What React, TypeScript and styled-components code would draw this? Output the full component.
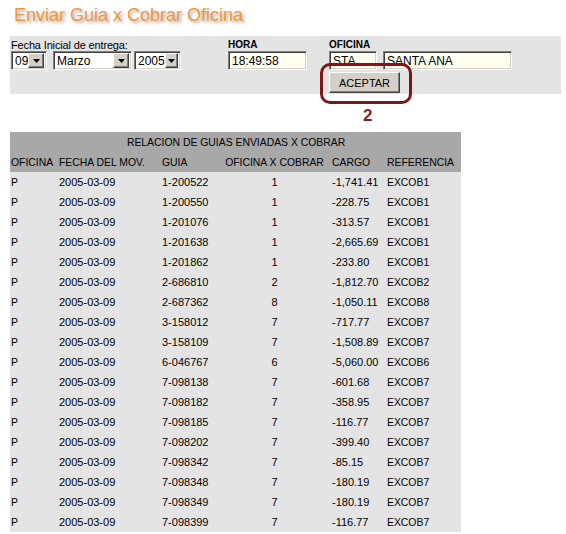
import React from "react";
import styled, { createGlobalStyle } from "styled-components";

const Global = createGlobalStyle`
  html, body { margin: 0; padding: 0; background: #ffffff; }
  body { font-family: "Liberation Sans", Arial, sans-serif; font-size: 11px; color: #000; }
`;

const Page = styled.div`
  width: 566px;
  height: 534px;
  overflow: hidden;
  position: relative;
`;

const Title = styled.h1`
  margin: 0;
  padding: 4px 0 0 14px;
  height: 32px;
  box-sizing: border-box;
  font-family: "Liberation Sans", Arial, sans-serif;
  font-weight: normal;
  font-size: 18px;
  line-height: 22px;
  color: #ec9843;
  text-shadow: 2px 2px 3px rgba(90, 60, 30, 0.45);
`;

const Panel = styled.div`
  position: relative;
  margin: 4px 0 0 10px;
  width: 551px;
  height: 58px;
  background: #e4e4e4;
  display: grid;
  grid-template-columns: 217px 101px 1fr;
  padding: 3px 0 0 1px;
  box-sizing: border-box;
`;

const Group = styled.div`
  display: flex;
  flex-direction: column;
`;

const Label = styled.div<{ $bold?: boolean }>`
  font-size: ${(p) => (p.$bold ? "10px" : "11px")};
  font-weight: ${(p) => (p.$bold ? "bold" : "normal")};
  line-height: 12px;
  height: 12px;
  letter-spacing: ${(p) => (p.$bold ? "0" : "-0.15px")};
`;

const Row = styled.div<{ $gap: number }>`
  display: flex;
  gap: ${(p) => p.$gap}px;
`;

const SelectBox = styled.div<{ $w: number }>`
  width: ${(p) => p.$w}px;
  height: 19px;
  box-sizing: border-box;
  background: #fff;
  border-style: solid;
  border-width: 1px;
  border-color: #808080 #ffffff #ffffff #808080;
  box-shadow: inset 1px 1px 0 #404040, inset -1px -1px 0 #d4d0c8;
  display: flex;
  align-items: center;
  justify-content: space-between;
  padding: 0 2px 0 3px;
  font-size: 12px;
`;

const ArrowBtn = styled.div`
  width: 16px;
  height: 15px;
  box-sizing: border-box;
  background: #d4d0c8;
  border-style: solid;
  border-width: 1px;
  border-color: #ffffff #404040 #404040 #ffffff;
  box-shadow: inset -1px -1px 0 #808080;
  display: flex;
  align-items: center;
  justify-content: center;
`;

const TextBox = styled.div<{ $w: number }>`
  width: ${(p) => p.$w}px;
  height: 19px;
  box-sizing: border-box;
  background: #fffff0;
  border-style: solid;
  border-width: 1px;
  border-color: #808080 #ffffff #ffffff #808080;
  box-shadow: inset 1px 1px 0 #404040, inset -1px -1px 0 #d4d0c8;
  display: flex;
  align-items: center;
  padding-left: 3px;
  font-size: 12px;
  white-space: nowrap;
  overflow: hidden;
`;

const Button = styled.button`
  margin-top: 2px;
  width: 71px;
  height: 21px;
  box-sizing: border-box;
  background: #d4d0c8;
  border-style: solid;
  border-width: 1px;
  border-color: #ffffff #404040 #404040 #ffffff;
  box-shadow: inset -1px -1px 0 #808080;
  font-family: "Liberation Sans", Arial, sans-serif;
  font-size: 11px;
  color: #000;
  padding: 0;
`;

const Mark = styled.div`
  position: absolute;
  left: 310px;
  top: 27px;
  width: 92px;
  height: 41px;
  box-sizing: border-box;
  border: 3px solid #7d1717;
  border-radius: 10px;
  pointer-events: none;
`;

const MarkNum = styled.div`
  position: absolute;
  left: 353px;
  top: 70px;
  font-size: 17px;
  font-weight: bold;
  color: #8e1c1c;
  font-family: "Liberation Sans", Arial, sans-serif;
`;

const Table = styled.table`
  margin: 38px 0 0 10px;
  width: 451px;
  border-collapse: collapse;
  border-spacing: 0;
  table-layout: fixed;
  font-size: 11px;
  font-family: "Liberation Sans", Arial, sans-serif;
`;

const HeadRow = styled.tr`
  background: #a8a8a8;
  height: 20px;
`;

const Th = styled.th<{ $align?: string }>`
  font-weight: normal;
  font-size: 10.4px;
  text-align: ${(p) => p.$align || "left"};
  padding: 0 0 0 1px;
  white-space: nowrap;
  overflow: hidden;
`;

const BodyRow = styled.tr`
  background: #e4e4e4;
  height: 20px;
`;

const Td = styled.td<{ $align?: string; $caps?: boolean }>`
  text-align: ${(p) => p.$align || "left"};
  font-size: ${(p) => (p.$caps ? "10.4px" : "11px")};
  padding: 0 0 0 1px;
  white-space: nowrap;
`;

const Arrow = () => (
  <svg width="7" height="4" viewBox="0 0 7 4">
    <path d="M0 0H7L3.5 4Z" fill="#000" />
  </svg>
);

const Select = ({ w, value }: { w: number; value: string }) => (
  <SelectBox $w={w}>
    <span>{value}</span>
    <ArrowBtn>
      <Arrow />
    </ArrowBtn>
  </SelectBox>
);

const rows: [string, string, string, string][] = [
  ["1-200522", "1", "-1,741.41", "EXCOB1"],
  ["1-200550", "1", "-228.75", "EXCOB1"],
  ["1-201076", "1", "-313.57", "EXCOB1"],
  ["1-201638", "1", "-2,665.69", "EXCOB1"],
  ["1-201862", "1", "-233.80", "EXCOB1"],
  ["2-686810", "2", "-1,812.70", "EXCOB2"],
  ["2-687362", "8", "-1,050.11", "EXCOB8"],
  ["3-158012", "7", "-717.77", "EXCOB7"],
  ["3-158109", "7", "-1,508.89", "EXCOB7"],
  ["6-046767", "6", "-5,060.00", "EXCOB6"],
  ["7-098138", "7", "-601.68", "EXCOB7"],
  ["7-098182", "7", "-358.95", "EXCOB7"],
  ["7-098185", "7", "-116.77", "EXCOB7"],
  ["7-098202", "7", "-399.40", "EXCOB7"],
  ["7-098342", "7", "-85.15", "EXCOB7"],
  ["7-098348", "7", "-180.19", "EXCOB7"],
  ["7-098349", "7", "-180.19", "EXCOB7"],
  ["7-098399", "7", "-116.77", "EXCOB7"],
];

export default function App() {
  return (
    <Page>
      <Global />
      <Title>Enviar Guia x Cobrar Oficina</Title>
      <Panel>
        <Group>
          <Label>Fecha Inicial de entrega:</Label>
          <Row $gap={6}>
            <Select w={36} value="09" />
            <Row $gap={2}>
              <Select w={79} value="Marzo" />
              <Select w={47} value="2005" />
            </Row>
          </Row>
        </Group>
        <Group>
          <Label $bold>HORA</Label>
          <Row $gap={0}>
            <TextBox $w={79}>18:49:58</TextBox>
          </Row>
        </Group>
        <Group>
          <Label $bold>OFICINA</Label>
          <Row $gap={6}>
            <TextBox $w={48}>STA</TextBox>
            <TextBox $w={129}>SANTA ANA</TextBox>
          </Row>
          <Button>ACEPTAR</Button>
        </Group>
        <Mark />
        <MarkNum>2</MarkNum>
      </Panel>
      <Table>
        <colgroup>
          <col style={{ width: 48 }} />
          <col style={{ width: 103 }} />
          <col style={{ width: 56 }} />
          <col style={{ width: 114 }} />
          <col style={{ width: 55 }} />
          <col style={{ width: 75 }} />
        </colgroup>
        <thead>
          <HeadRow>
            <Th colSpan={6} $align="center">
              RELACION DE GUIAS ENVIADAS X COBRAR
            </Th>
          </HeadRow>
          <HeadRow>
            <Th>OFICINA</Th>
            <Th>FECHA DEL MOV.</Th>
            <Th>GUIA</Th>
            <Th $align="center">OFICINA X COBRAR</Th>
            <Th>CARGO</Th>
            <Th>REFERENCIA</Th>
          </HeadRow>
        </thead>
        <tbody>
          {rows.map((r, i) => (
            <BodyRow key={i}>
              <Td $caps>P</Td>
              <Td>2005-03-09</Td>
              <Td>{r[0]}</Td>
              <Td $align="center">{r[1]}</Td>
              <Td>{r[2]}</Td>
              <Td $caps>{r[3]}</Td>
            </BodyRow>
          ))}
        </tbody>
      </Table>
    </Page>
  );
}
